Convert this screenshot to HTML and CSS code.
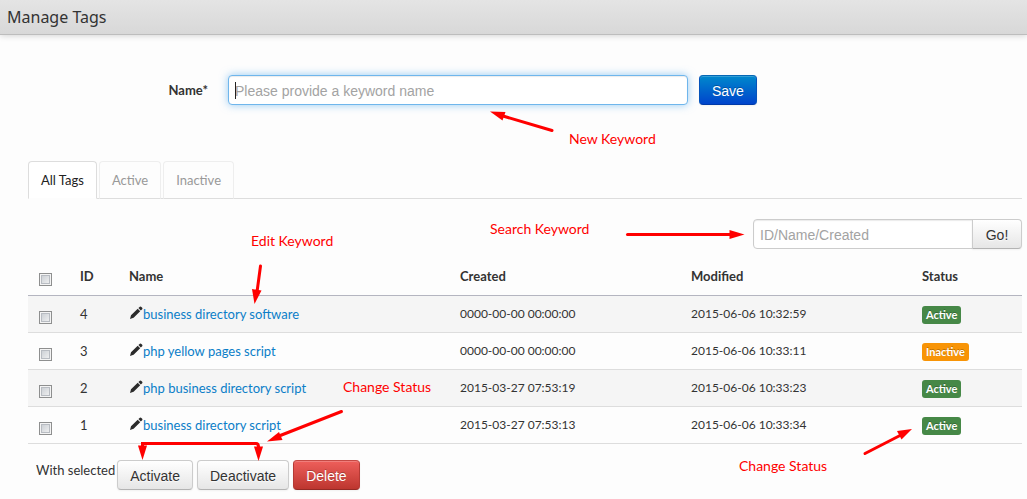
FILE: index.html
```
<!DOCTYPE html>
<html lang="en">
<head>
<meta charset="utf-8">
<title>Manage Tags</title>
<link rel="stylesheet" href="styles.css">
</head>
<body>
<svg class="sprite" aria-hidden="true">
  <symbol id="pencil" viewBox="0 0 14 14">
    <path d="M1 13 L2 9.2 L8.7 2.8 L11.2 5.3 L4.6 11.8 Z M9.4 2.1 L10.9 .7 Q11.7 .2 12.4 .9 L13.2 1.7 Q13.8 2.4 13.2 3.2 L11.8 4.6 Z"/>
  </symbol>
</svg>
<header class="page-header"><h1 class="page-title">Manage Tags</h1></header>
<main class="content">
  <form class="name-form">
    <label class="name-label" for="name">Name*</label>
    <div class="name-field">
      <input class="input input-focus" id="name" type="text" placeholder="Please provide a keyword name">
      <span class="caret"></span>
    </div>
    <button class="btn btn-primary" type="button">Save</button>
  </form>
  <nav class="tabs">
    <a class="tab tab-current" href="#all">All Tags</a>
    <a class="tab" href="#active">Active</a>
    <a class="tab" href="#inactive">Inactive</a>
  </nav>
  <form class="search">
    <input class="input search-input" type="text" placeholder="ID/Name/Created" aria-label="Search tags">
    <button class="btn search-btn" type="button">Go!</button>
  </form>
  <table class="table">
    <colgroup><col class="col-check"><col class="col-id"><col><col class="col-date"><col class="col-date"><col class="col-status"></colgroup>
    <thead>
      <tr><th><input class="check" type="checkbox" aria-label="Select all"></th><th>ID</th><th>Name</th><th>Created</th><th>Modified</th><th>Status</th></tr>
    </thead>
    <tbody>
      <tr><td><input class="check" type="checkbox" aria-label="Select 4"></td><td>4</td><td><a class="edit" href="#4"><svg class="pencil"><use href="#pencil"/></svg>business directory software</a></td><td class="date">0000-00-00 00:00:00</td><td class="date">2015-06-06 10:32:59</td><td><span class="badge">Active</span></td></tr>
      <tr><td><input class="check" type="checkbox" aria-label="Select 3"></td><td>3</td><td><a class="edit" href="#3"><svg class="pencil"><use href="#pencil"/></svg>php yellow pages script</a></td><td class="date">0000-00-00 00:00:00</td><td class="date">2015-06-06 10:33:11</td><td><span class="badge badge-warning">Inactive</span></td></tr>
      <tr><td><input class="check" type="checkbox" aria-label="Select 2"></td><td>2</td><td><a class="edit" href="#2"><svg class="pencil"><use href="#pencil"/></svg>php business directory script</a></td><td class="date">2015-03-27 07:53:19</td><td class="date">2015-06-06 10:33:23</td><td><span class="badge">Active</span></td></tr>
      <tr><td><input class="check" type="checkbox" aria-label="Select 1"></td><td>1</td><td><a class="edit" href="#1"><svg class="pencil"><use href="#pencil"/></svg>business directory script</a></td><td class="date">2015-03-27 07:53:13</td><td class="date">2015-06-06 10:33:34</td><td><span class="badge">Active</span></td></tr>
    </tbody>
  </table>
  <div class="bulk">
    <span class="bulk-label">With selected</span>
    <button class="btn" type="button">Activate</button>
    <button class="btn" type="button">Deactivate</button>
    <button class="btn btn-danger" type="button">Delete</button>
  </div>
</main>
<svg class="notes" width="1027" height="499" viewBox="0 0 1027 499">
  <g class="arrow-lines">
    <path d="M552 130.500 L503 116"/>
    <path d="M627.500 234.500 H732"/>
    <path d="M260.500 266 L257 292"/>
    <path d="M341.500 411.500 L279 436"/>
    <path d="M142.500 448 V443.500 H256 Q258.500 443.500 258.500 447"/>
    <path d="M865 453.500 L901 435"/>
  </g>
  <g class="arrow-heads">
    <path d="M490 111.500 L505.500 112 L502.500 120.500 Z"/>
    <path d="M744.500 234.500 L729.500 230 V239 Z"/>
    <path d="M254.500 304 L252 289 L261.500 290.500 Z"/>
    <path d="M267 441.500 L279 432 L282.500 440 Z"/>
    <path d="M142.500 460 L138 445.500 H147 Z"/>
    <path d="M258.500 461 L254 446.500 H263 Z"/>
    <path d="M912 429 L897 431 L901.500 439.500 Z"/>
  </g>
  <g class="note-text">
    <text x="569" y="144">New Keyword</text>
    <text x="490" y="234">Search Keyword</text>
    <text x="251" y="246">Edit Keyword</text>
    <text x="343" y="392">Change Status</text>
    <text x="739" y="471">Change Status</text>
  </g>
</svg>
</body>
</html>
```
FILE: styles.css
```
* { box-sizing: border-box; }
body {
  margin: 0;
  background: #fdfdfd;
  color: #333;
  font: 13px/20px Lato, "Noto Sans", sans-serif;
}
.sprite { position: absolute; width: 0; height: 0; }
.page-header {
  padding: 7px;
  border-bottom: 1px solid #bdbdbd;
  background: linear-gradient(#e4e4e4, #d8d8d8);
  box-shadow: 0 1px 6px rgba(0, 0, 0, .16);
}
.page-title { margin: 0; font: 400 16px/20px "Noto Sans", sans-serif; }
.content { padding: 40px 5px 8px 28px; }
.name-form { display: flex; align-items: center; gap: 11px; }
.name-label { width: 180px; margin-right: 9px; text-align: right; font-weight: 700; }
.name-field { position: relative; width: 460px; }
.caret { position: absolute; left: 7px; top: 7px; width: 1px; height: 17px; background: #222; }
.input {
  display: block;
  width: 100%;
  height: 30px;
  padding: 5px 6px 3px;
  border: 1px solid #ccc;
  border-radius: 4px;
  background: #fff;
  box-shadow: inset 0 1px 1px rgba(0, 0, 0, .08);
  color: #555;
  font: 14px/20px "Liberation Sans", Arial, sans-serif;
}
.input::placeholder { color: #a3a3a3; opacity: 1; }
.input-focus { border-color: #6fb6ec; box-shadow: inset 0 1px 1px rgba(0, 0, 0, .08), 0 0 8px rgba(82, 168, 236, .6); }
.btn {
  height: 30px;
  padding: 5px 12px 3px;
  border: 1px solid #ccc;
  border-bottom-color: #b3b3b3;
  border-radius: 4px;
  background: linear-gradient(#fff, #e6e6e6);
  box-shadow: inset 0 1px 0 rgba(255, 255, 255, .2), 0 1px 2px rgba(0, 0, 0, .05);
  color: #333;
  font: 14px/20px "Liberation Sans", Arial, sans-serif;
  text-shadow: 0 1px 1px rgba(255, 255, 255, .75);
}
.btn-primary, .btn-danger { color: #fff; text-shadow: 0 -1px 0 rgba(0, 0, 0, .25); }
.btn-primary { border-color: #0567b5 #0553bb #003aa8; background: linear-gradient(#0088cc, #0044cc); }
.btn-danger { border-color: #c54a45 #b53a35 #942a25; background: linear-gradient(#ee5f5b, #bd362f); }
.tabs { display: flex; gap: 2px; margin: 56px 0 20px; border-bottom: 1px solid #ddd; }
.tab {
  margin-bottom: -1px;
  padding: 8px 12px;
  border: 1px solid #eee;
  border-bottom-color: #ddd;
  border-radius: 4px 4px 0 0;
  color: #999;
  text-decoration: none;
}
.tab-current { border-color: #ddd #ddd #fdfdfd; background: #fff; color: #222; }
.search { display: flex; justify-content: flex-end; }
.search-input { width: 220px; border-radius: 4px 0 0 4px; }
.search-btn { width: 50px; margin-left: -1px; border-radius: 0 4px 4px 0; }
.table { width: 100%; margin-top: 9px; border-collapse: collapse; table-layout: fixed; }
.col-check { width: 44px; }
.col-id { width: 49px; }
.col-date { width: 231px; }
.col-status { width: 108px; }
.table th, .table td { height: 37px; padding: 8px; border-bottom: 1px solid #ddd; text-align: left; vertical-align: top; }
.table th { border-bottom-color: #b4b5c0; font-weight: 700; }
.table tbody tr:nth-child(odd) { background: #f5f5f5; }
.table .date { font-size: 12px; }
.check {
  display: block;
  appearance: none;
  width: 13px;
  height: 13px;
  margin: 7px 3px 0;
  border: 1px solid #8e8f8f;
  background: linear-gradient(135deg, #c4c9cf, #f6f6f6);
  box-shadow: inset 0 0 0 1px #f4f4f4, inset 0 0 0 2px #b8bcc2;
}
.edit { display: flex; color: #0b7ec8; text-decoration: none; white-space: nowrap; }
.pencil { width: 14px; height: 14px; margin-top: 2px; fill: #2b2b2b; }
.badge {
  display: inline-block;
  padding: 2px 4px;
  border-radius: 3px;
  background: #468847;
  color: #fff;
  font-size: 11px;
  font-weight: 700;
  line-height: 14px;
  text-shadow: 0 -1px 0 rgba(0, 0, 0, .25);
}
.badge-warning { background: #f89406; }
.bulk { display: flex; gap: 4px; padding: 16px 8px 0; }
.bulk-label { margin-right: -2px; white-space: nowrap; }
.notes { position: absolute; left: 0; top: 0; pointer-events: none; }
.arrow-lines { fill: none; stroke: #f00; stroke-width: 3; stroke-linecap: round; }
.arrow-heads { fill: #f00; }
.note-text { fill: #f00; font: 14px Lato, "Noto Sans", sans-serif; }
```
